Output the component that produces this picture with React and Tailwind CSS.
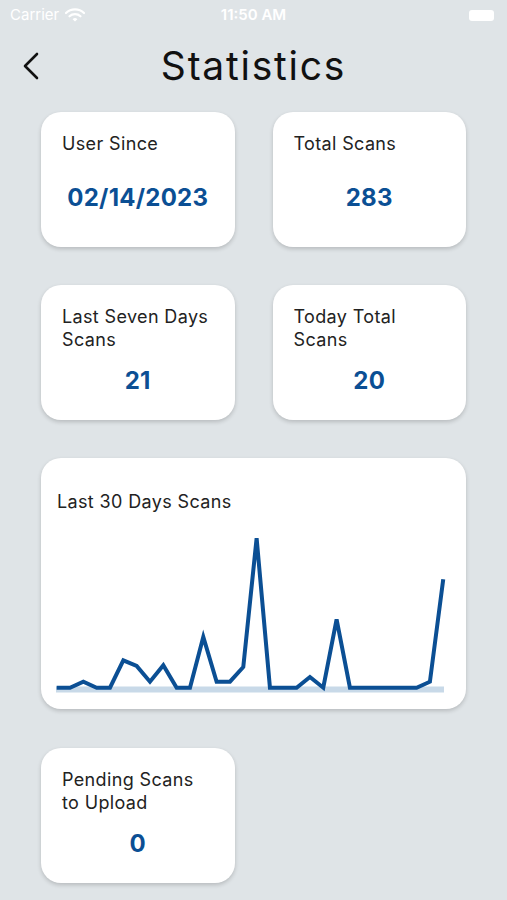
import React from 'react';

const points = [
  686.7, 686.7, 680.7, 686.7, 686.7, 659.3, 665, 680.7, 664.3, 686.7,
  686.7, 636, 680.7, 680.7, 666, 537.3, 686.7, 686.7, 686.7, 676,
  686.7, 618.3, 686.7, 686.7, 686.7, 686.7, 686.7, 686.7, 680.7, 578.3,
];

function StatCard({ label, value, gap }) {
  return (
    <div className="h-[135px] rounded-[20px] bg-white px-[21px] pt-5 shadow-[0_2px_4px_rgba(0,0,0,0.18)]">
      <div className="text-[18px] leading-[23px] tracking-[0.02em] text-[#222]">{label}</div>
      <div className={`${gap} text-center text-[24px] leading-[30px] font-bold tracking-[0.01em] text-[#0b4f94]`}>
        {value}
      </div>
    </div>
  );
}

function Chart() {
  // coordinates measured in page pixels, shifted into the card
  const pts = points
    .map((y, i) => `${(15.67 + i * 13.33).toFixed(2)},${(y - 527).toFixed(2)}`)
    .join(' ');
  return (
    <svg width="426" height="175" viewBox="0 0 426 175" className="block">
      <rect x="15" y="158.5" width="388" height="6" fill="#c8d9e8" />
      <polyline
        points={pts}
        fill="none"
        stroke="#0b4f94"
        strokeWidth="4"
        strokeLinejoin="miter"
        strokeMiterlimit="4"
      />
    </svg>
  );
}

export default function App() {
  return (
    <div
      className="min-h-[900px] w-[507px] bg-[#dfe4e7]"
      style={{ fontFamily: 'Inter, "Noto Sans", sans-serif' }}
    >
      {/* status bar */}
      <div className="relative flex h-[30px] items-center px-[10px] text-white">
        <div className="flex items-center gap-[6px] text-[15px]">
          <span>Carrier</span>
          <svg width="20" height="14" viewBox="0 0 20 14">
            <path d="M1 5a13 13 0 0 1 18 0" stroke="white" strokeWidth="2.2" fill="none" strokeLinecap="round" />
            <path d="M4.5 8.3a8 8 0 0 1 11 0" stroke="white" strokeWidth="2.2" fill="none" strokeLinecap="round" />
            <path d="M7.6 11.2l2.4 2.3 2.4-2.3a3.4 3.4 0 0 0-4.8 0z" fill="white" />
          </svg>
        </div>
        <div className="absolute left-0 right-0 text-center text-[15px] font-semibold">11:50 AM</div>
        <div className="ml-auto mr-[3px] h-[11px] w-[25px] rounded-[3px] bg-white" />
      </div>

      {/* nav */}
      <div className="relative flex h-[72px] items-center justify-center">
        <svg className="absolute left-[22px]" width="18" height="28" viewBox="0 0 18 28">
          <path d="M15 2L3 14l12 12" stroke="#111" strokeWidth="2.6" fill="none" strokeLinecap="round" strokeLinejoin="round" />
        </svg>
        <h1 className="text-[39px] leading-[46px] tracking-[0.045em] text-[#111]">Statistics</h1>
      </div>

      <div className="px-[41px] pt-[10px]">
        <div className="grid grid-cols-2 gap-x-[38px] gap-y-[38px]">
          <StatCard label="User Since" value="02/14/2023" gap="mt-[28px]" />
          <StatCard label="Total Scans" value="283" gap="mt-[28px]" />
          <StatCard label={<>Last Seven Days<br />Scans</>} value="21" gap="mt-[15px]" />
          <StatCard label={<>Today Total<br />Scans</>} value="20" gap="mt-[15px]" />
        </div>

        <div className="mt-[38px] h-[251px] rounded-[20px] bg-white shadow-[0_2px_4px_rgba(0,0,0,0.18)]">
          <div className="pl-[16px] pt-[32px] text-[18px] leading-[23px] tracking-[0.02em] text-[#222]">Last 30 Days Scans</div>
          <div className="mt-[15px]">
            <Chart />
          </div>
        </div>

        <div className="mt-[39px] grid grid-cols-2 gap-x-[38px]">
          <StatCard label={<>Pending Scans<br />to Upload</>} value="0" gap="mt-[15px]" />
        </div>
      </div>
    </div>
  );
}
